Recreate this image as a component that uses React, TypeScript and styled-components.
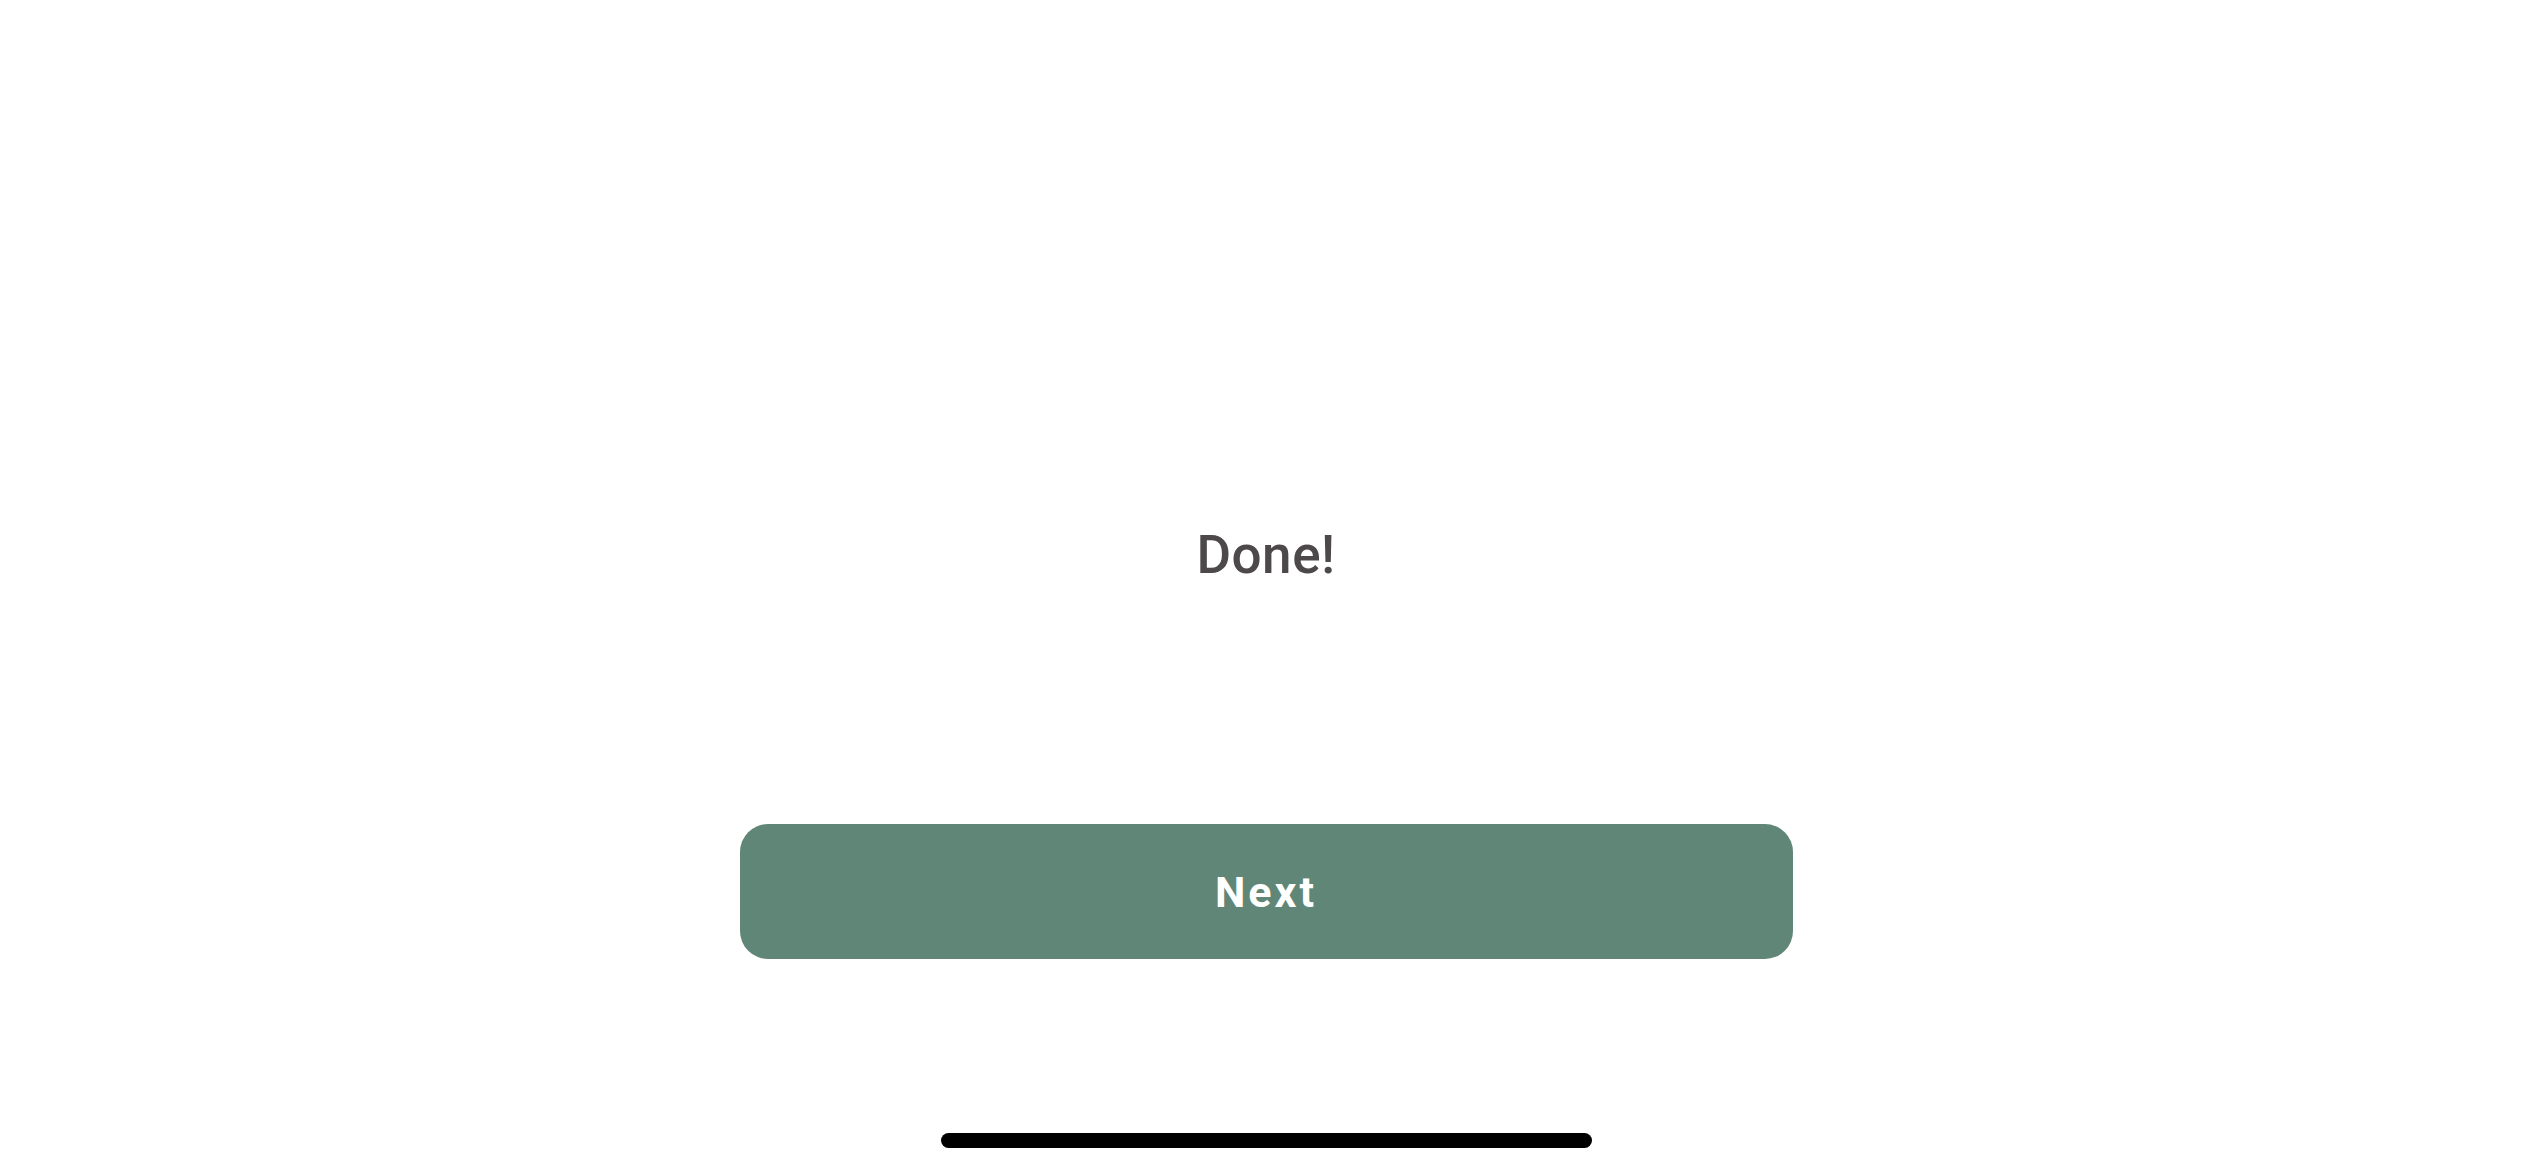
import React from "react";
import styled, { createGlobalStyle } from "styled-components";

const Global = createGlobalStyle`
  html, body { margin: 0; padding: 0; background: #ffffff; }
  body { font-family: Roboto, Inter, "Noto Sans", sans-serif; }
`;

const Page = styled.div`
  width: 2532px;
  height: 1170px;
  display: flex;
  flex-direction: column;
  align-items: center;
  box-sizing: border-box;
  padding-top: 523px;
  background: #ffffff;
  overflow: hidden;
`;

const Message = styled.div`
  height: 64px;
  line-height: 64px;
  font-size: 53px;
  font-weight: 500;
  letter-spacing: 0.5px;
  color: #4d494a;
`;

const NextButton = styled.button`
  margin-top: 237px;
  width: 1053px;
  height: 135px;
  padding: 0;
  border: none;
  border-radius: 28px;
  background: #5f8676;
  color: #ffffff;
  font-family: Roboto, Inter, "Noto Sans", sans-serif;
  font-size: 43px;
  font-weight: 700;
  letter-spacing: 3px;
  display: flex;
  align-items: center;
  justify-content: center;
  cursor: pointer;
`;

const HomeIndicator = styled.div`
  margin-top: 174px;
  width: 651px;
  height: 15px;
  border-radius: 8px;
  background: #000000;
`;

export default function App() {
  return (
    <>
      <Global />
      <Page>
        <Message>Done!</Message>
        <NextButton>Next</NextButton>
        <HomeIndicator />
      </Page>
    </>
  );
}
